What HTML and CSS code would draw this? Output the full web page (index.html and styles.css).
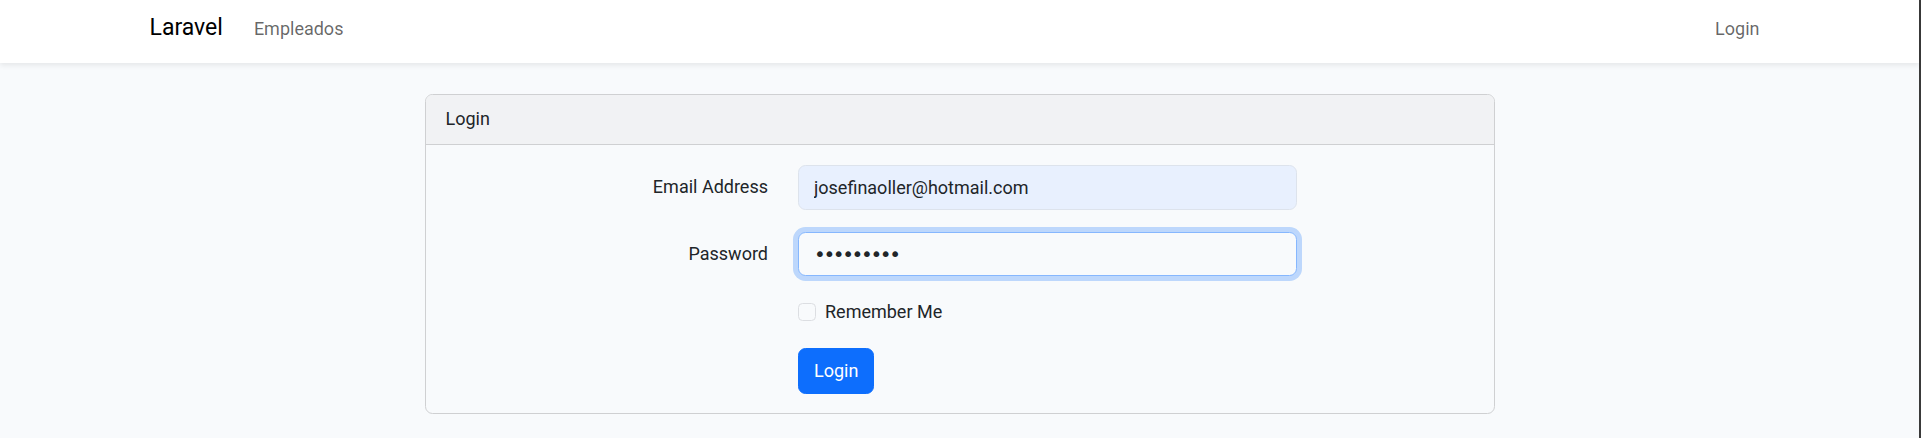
FILE: index.html
```html
<!DOCTYPE html>
<html lang="es">
<head>
<meta charset="utf-8">
<title>Laravel</title>
<link rel="stylesheet" href="styles.css">
</head>
<body>
<div class="app">
  <nav class="navbar">
    <div class="container nav-inner">
      <a class="brand" href="#">Laravel</a>
      <ul class="nav-left">
        <li><a class="nav-link" href="#">Empleados</a></li>
      </ul>
      <ul class="nav-right">
        <li><a class="nav-link" href="#">Login</a></li>
      </ul>
    </div>
  </nav>
  <main class="main">
    <div class="card">
      <div class="card-header">Login</div>
      <div class="card-body">
        <form class="login-form">
          <div class="form-row">
            <label class="col-label" for="email">Email Address</label>
            <input id="email" class="form-control autofilled" type="email" value="josefinaoller@hotmail.com">
          </div>
          <div class="form-row">
            <label class="col-label" for="password">Password</label>
            <input id="password" class="form-control focused" type="password" value="secret123">
          </div>
          <div class="form-row">
            <div class="form-check">
              <span class="check-box"></span>
              <label class="check-label">Remember Me</label>
            </div>
          </div>
          <div class="form-row last">
            <div class="btn-cell">
              <button type="button" class="btn-primary">Login</button>
            </div>
          </div>
        </form>
      </div>
    </div>
  </main>
</div>
</body>
</html>
```
FILE: styles.css
```css
* { box-sizing: border-box; }

html, body {
  margin: 0;
  padding: 0;
}

body {
  background: #f8fafc;
  color: #212529;
  font-family: Roboto, "Liberation Sans", sans-serif;
  font-size: 18px;
  line-height: 28.8px;
}

.app {
  min-height: 100vh;
  border-right: 2px solid #3a3a3a;
}

.navbar {
  background: #fff;
  height: 63px;
  box-shadow: 0 2.5px 5px rgba(0, 0, 0, 0.075);
  position: relative;
  z-index: 1;
}

.container {
  width: 1650px;
  margin: 0 auto;
  padding: 0 15px;
}

.nav-inner {
  display: flex;
  align-items: baseline;
  padding-top: 10px;
}

.brand {
  font-size: 23px;
  line-height: 36px;
  color: #000;
  text-decoration: none;
  margin-right: 21px;
}

.nav-left,
.nav-right {
  list-style: none;
  margin: 0;
  padding: 0;
  display: flex;
}

.nav-right {
  margin-left: auto;
}

.nav-link {
  display: block;
  padding: 0 10px;
  color: rgba(0, 0, 0, 0.6);
  text-decoration: none;
}

.main {
  padding: 31px 0 30px;
}

.card {
  width: 1070px;
  margin: 0 auto;
  border: 1px solid #cfd0d2;
  border-radius: 7.5px;
  background: #f8fafc;
  overflow: hidden;
}

.card-header {
  background: #f1f2f4;
  padding: 10px 20px;
  border-bottom: 1px solid #cfd0d2;
}

.card-body {
  padding: 20px 20px 19px;
}

.form-row {
  display: grid;
  grid-template-columns: 322.5px 498.75px;
  column-gap: 30px;
  margin-bottom: 22px;
}

.form-row.last {
  margin-bottom: 0;
  margin-top: -1px;
}

.col-label {
  text-align: right;
  padding-top: 8px;
}

.form-control {
  display: block;
  width: 100%;
  height: 44.8px;
  padding: 7px 15px;
  font-family: inherit;
  font-size: 18px;
  line-height: 28.8px;
  color: #212529;
  background: #f8fafc;
  border: 1px solid #dee2e6;
  border-radius: 7.5px;
  outline: none;
}

.autofilled {
  background: #e8f0fe;
  border-color: #dde3ec;
}

.focused {
  border-color: #86b7fe;
  box-shadow: 0 0 0 5px rgba(13, 110, 253, 0.25);
  font-family: "DejaVu Sans", sans-serif;
  font-size: 20px;
  letter-spacing: -2.4px;
}

.form-check {
  grid-column: 2;
  display: flex;
  align-items: flex-start;
}

.check-box {
  width: 18px;
  height: 18px;
  margin-top: 4.5px;
  margin-right: 9px;
  border: 1px solid #dcdee2;
  border-radius: 4.5px;
  background: #f8fafc;
  flex: none;
}

.btn-cell {
  grid-column: 2;
}

.btn-primary {
  font-family: inherit;
  font-size: 18px;
  line-height: 28.8px;
  padding: 7.5px 15px;
  color: #fff;
  background: #0d6efd;
  border: 1px solid #0d6efd;
  border-radius: 7.5px;
  cursor: pointer;
}
```
